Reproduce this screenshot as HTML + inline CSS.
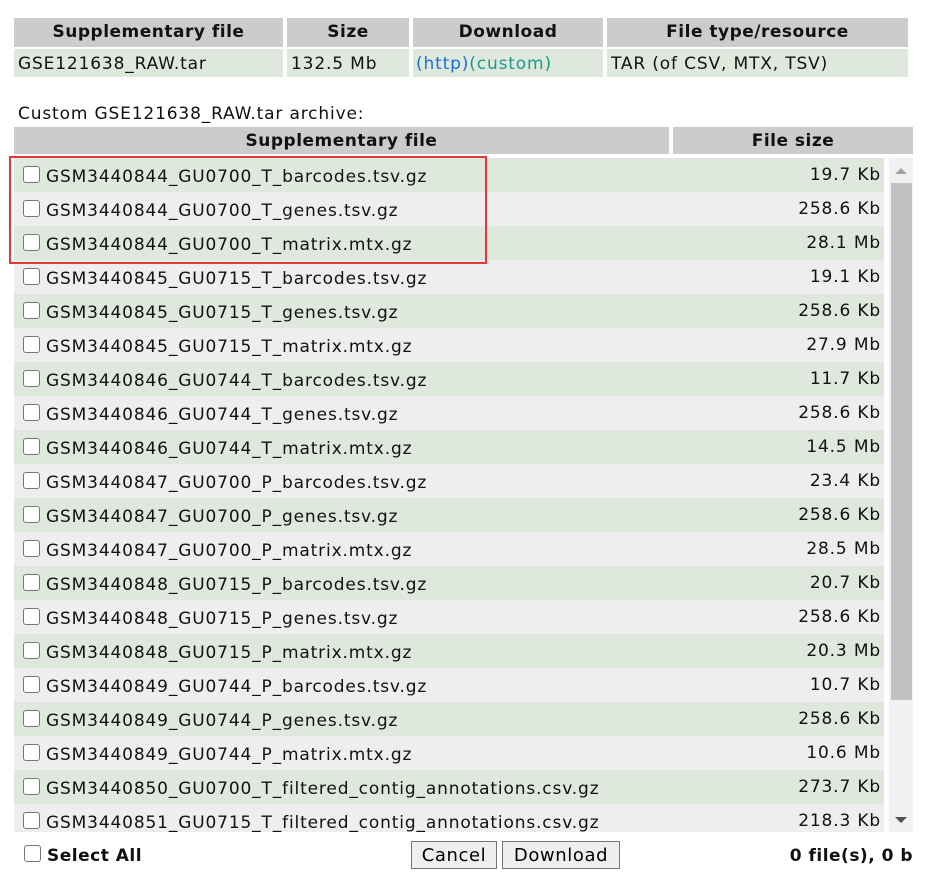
<!DOCTYPE html>
<html><head><meta charset="utf-8"><style>
body{margin:0;background:#fff;font-family:"DejaVu Sans",Verdana,sans-serif;font-size:17px;letter-spacing:0.85px;color:#111;width:944px;height:887px;position:relative;overflow:hidden}
.a{position:absolute;box-sizing:border-box}
.h{background:#ccc;font-weight:bold;text-align:center;line-height:29px;letter-spacing:0.5px}
.g{background:#dfe8dc}
.cb{display:inline-block;width:17px;height:17px;border:1px solid #767676;border-radius:3px;background:#fff;box-sizing:border-box;vertical-align:-1px;margin-right:6px}
.row{position:absolute;left:0;width:870px;height:34px;line-height:34px}
.row .n{position:absolute;left:9px;top:2px}
.row .s{position:absolute;right:3px;top:0}
button{position:absolute;font-family:"DejaVu Sans",Verdana,sans-serif;font-size:18px;letter-spacing:0.6px;background:#efefef;border:1px solid #767676;padding:0;height:28px;top:841px}
</style></head><body>
<div class="a h" style="left:14px;top:18px;width:269px;height:29px">Supplementary file</div>
<div class="a h" style="left:287px;top:18px;width:122px;height:29px">Size</div>
<div class="a h" style="left:413px;top:18px;width:190px;height:29px">Download</div>
<div class="a h" style="left:607px;top:18px;width:301px;height:29px">File type/resource</div>
<div class="a g" style="left:14px;top:49px;width:269px;height:28px;line-height:30px;padding-left:4px">GSE121638_RAW.tar</div>
<div class="a g" style="left:287px;top:49px;width:122px;height:28px;line-height:30px;padding-left:4px">132.5 Mb</div>
<div class="a g" style="left:413px;top:49px;width:190px;height:28px;line-height:30px;padding-left:3px"><span style="color:#1a6fd0">(http)</span><span style="color:#1a9a8a">(custom)</span></div>
<div class="a g" style="left:607px;top:49px;width:301px;height:28px;line-height:30px;padding-left:4px">TAR (of CSV, MTX, TSV)</div>
<div class="a" style="left:18px;top:103px;line-height:22px">Custom GSE121638_RAW.tar archive:</div>
<div class="a h" style="left:14px;top:127px;width:655px;height:27px;line-height:29px">Supplementary file</div>
<div class="a h" style="left:673px;top:127px;width:240px;height:27px;line-height:29px">File size</div>
<div class="a" style="left:14px;top:158px;width:870px;height:674px;overflow:hidden">
<div class="row g" style="top:0"><span class="n"><span class="cb"></span>GSM3440844_GU0700_T_barcodes.tsv.gz</span><span class="s">19.7 Kb</span></div>
<div class="row" style="top:34px;background:#eee"><span class="n"><span class="cb"></span>GSM3440844_GU0700_T_genes.tsv.gz</span><span class="s">258.6 Kb</span></div>
<div class="row g" style="top:68px"><span class="n"><span class="cb"></span>GSM3440844_GU0700_T_matrix.mtx.gz</span><span class="s">28.1 Mb</span></div>
<div class="row" style="top:102px;background:#eee"><span class="n"><span class="cb"></span>GSM3440845_GU0715_T_barcodes.tsv.gz</span><span class="s">19.1 Kb</span></div>
<div class="row g" style="top:136px"><span class="n"><span class="cb"></span>GSM3440845_GU0715_T_genes.tsv.gz</span><span class="s">258.6 Kb</span></div>
<div class="row" style="top:170px;background:#eee"><span class="n"><span class="cb"></span>GSM3440845_GU0715_T_matrix.mtx.gz</span><span class="s">27.9 Mb</span></div>
<div class="row g" style="top:204px"><span class="n"><span class="cb"></span>GSM3440846_GU0744_T_barcodes.tsv.gz</span><span class="s">11.7 Kb</span></div>
<div class="row" style="top:238px;background:#eee"><span class="n"><span class="cb"></span>GSM3440846_GU0744_T_genes.tsv.gz</span><span class="s">258.6 Kb</span></div>
<div class="row g" style="top:272px"><span class="n"><span class="cb"></span>GSM3440846_GU0744_T_matrix.mtx.gz</span><span class="s">14.5 Mb</span></div>
<div class="row" style="top:306px;background:#eee"><span class="n"><span class="cb"></span>GSM3440847_GU0700_P_barcodes.tsv.gz</span><span class="s">23.4 Kb</span></div>
<div class="row g" style="top:340px"><span class="n"><span class="cb"></span>GSM3440847_GU0700_P_genes.tsv.gz</span><span class="s">258.6 Kb</span></div>
<div class="row" style="top:374px;background:#eee"><span class="n"><span class="cb"></span>GSM3440847_GU0700_P_matrix.mtx.gz</span><span class="s">28.5 Mb</span></div>
<div class="row g" style="top:408px"><span class="n"><span class="cb"></span>GSM3440848_GU0715_P_barcodes.tsv.gz</span><span class="s">20.7 Kb</span></div>
<div class="row" style="top:442px;background:#eee"><span class="n"><span class="cb"></span>GSM3440848_GU0715_P_genes.tsv.gz</span><span class="s">258.6 Kb</span></div>
<div class="row g" style="top:476px"><span class="n"><span class="cb"></span>GSM3440848_GU0715_P_matrix.mtx.gz</span><span class="s">20.3 Mb</span></div>
<div class="row" style="top:510px;background:#eee"><span class="n"><span class="cb"></span>GSM3440849_GU0744_P_barcodes.tsv.gz</span><span class="s">10.7 Kb</span></div>
<div class="row g" style="top:544px"><span class="n"><span class="cb"></span>GSM3440849_GU0744_P_genes.tsv.gz</span><span class="s">258.6 Kb</span></div>
<div class="row" style="top:578px;background:#eee"><span class="n"><span class="cb"></span>GSM3440849_GU0744_P_matrix.mtx.gz</span><span class="s">10.6 Mb</span></div>
<div class="row g" style="top:612px"><span class="n"><span class="cb"></span>GSM3440850_GU0700_T_filtered_contig_annotations.csv.gz</span><span class="s">273.7 Kb</span></div>
<div class="row" style="top:646px;background:#eee"><span class="n"><span class="cb"></span>GSM3440851_GU0715_T_filtered_contig_annotations.csv.gz</span><span class="s">218.3 Kb</span></div>
</div>
<div class="a" style="left:889px;top:158px;width:24px;height:674px;background:#f1f1f1"></div>
<div class="a" style="left:891px;top:183px;width:21px;height:517px;background:#c1c1c1"></div>
<div class="a" style="left:895px;top:168px;width:0;height:0;border-left:6px solid transparent;border-right:6px solid transparent;border-bottom:6px solid #a3a3a3"></div>
<div class="a" style="left:895px;top:817px;width:0;height:0;border-left:6px solid transparent;border-right:6px solid transparent;border-top:6px solid #505050"></div>
<div class="a" style="left:9px;top:156px;width:478px;height:108px;border:2px solid #e53935"></div>
<div class="a" style="left:24px;top:845px;line-height:22px;font-weight:bold;letter-spacing:0.5px"><span class="cb" style="margin-right:6px"></span>Select All</div>
<button style="left:411px;width:86px">Cancel</button>
<button style="left:502px;width:118px">Download</button>
<div class="a" style="right:31px;top:845px;line-height:22px;font-weight:bold;letter-spacing:0.5px">0 file(s), 0 b</div>
</body></html>
